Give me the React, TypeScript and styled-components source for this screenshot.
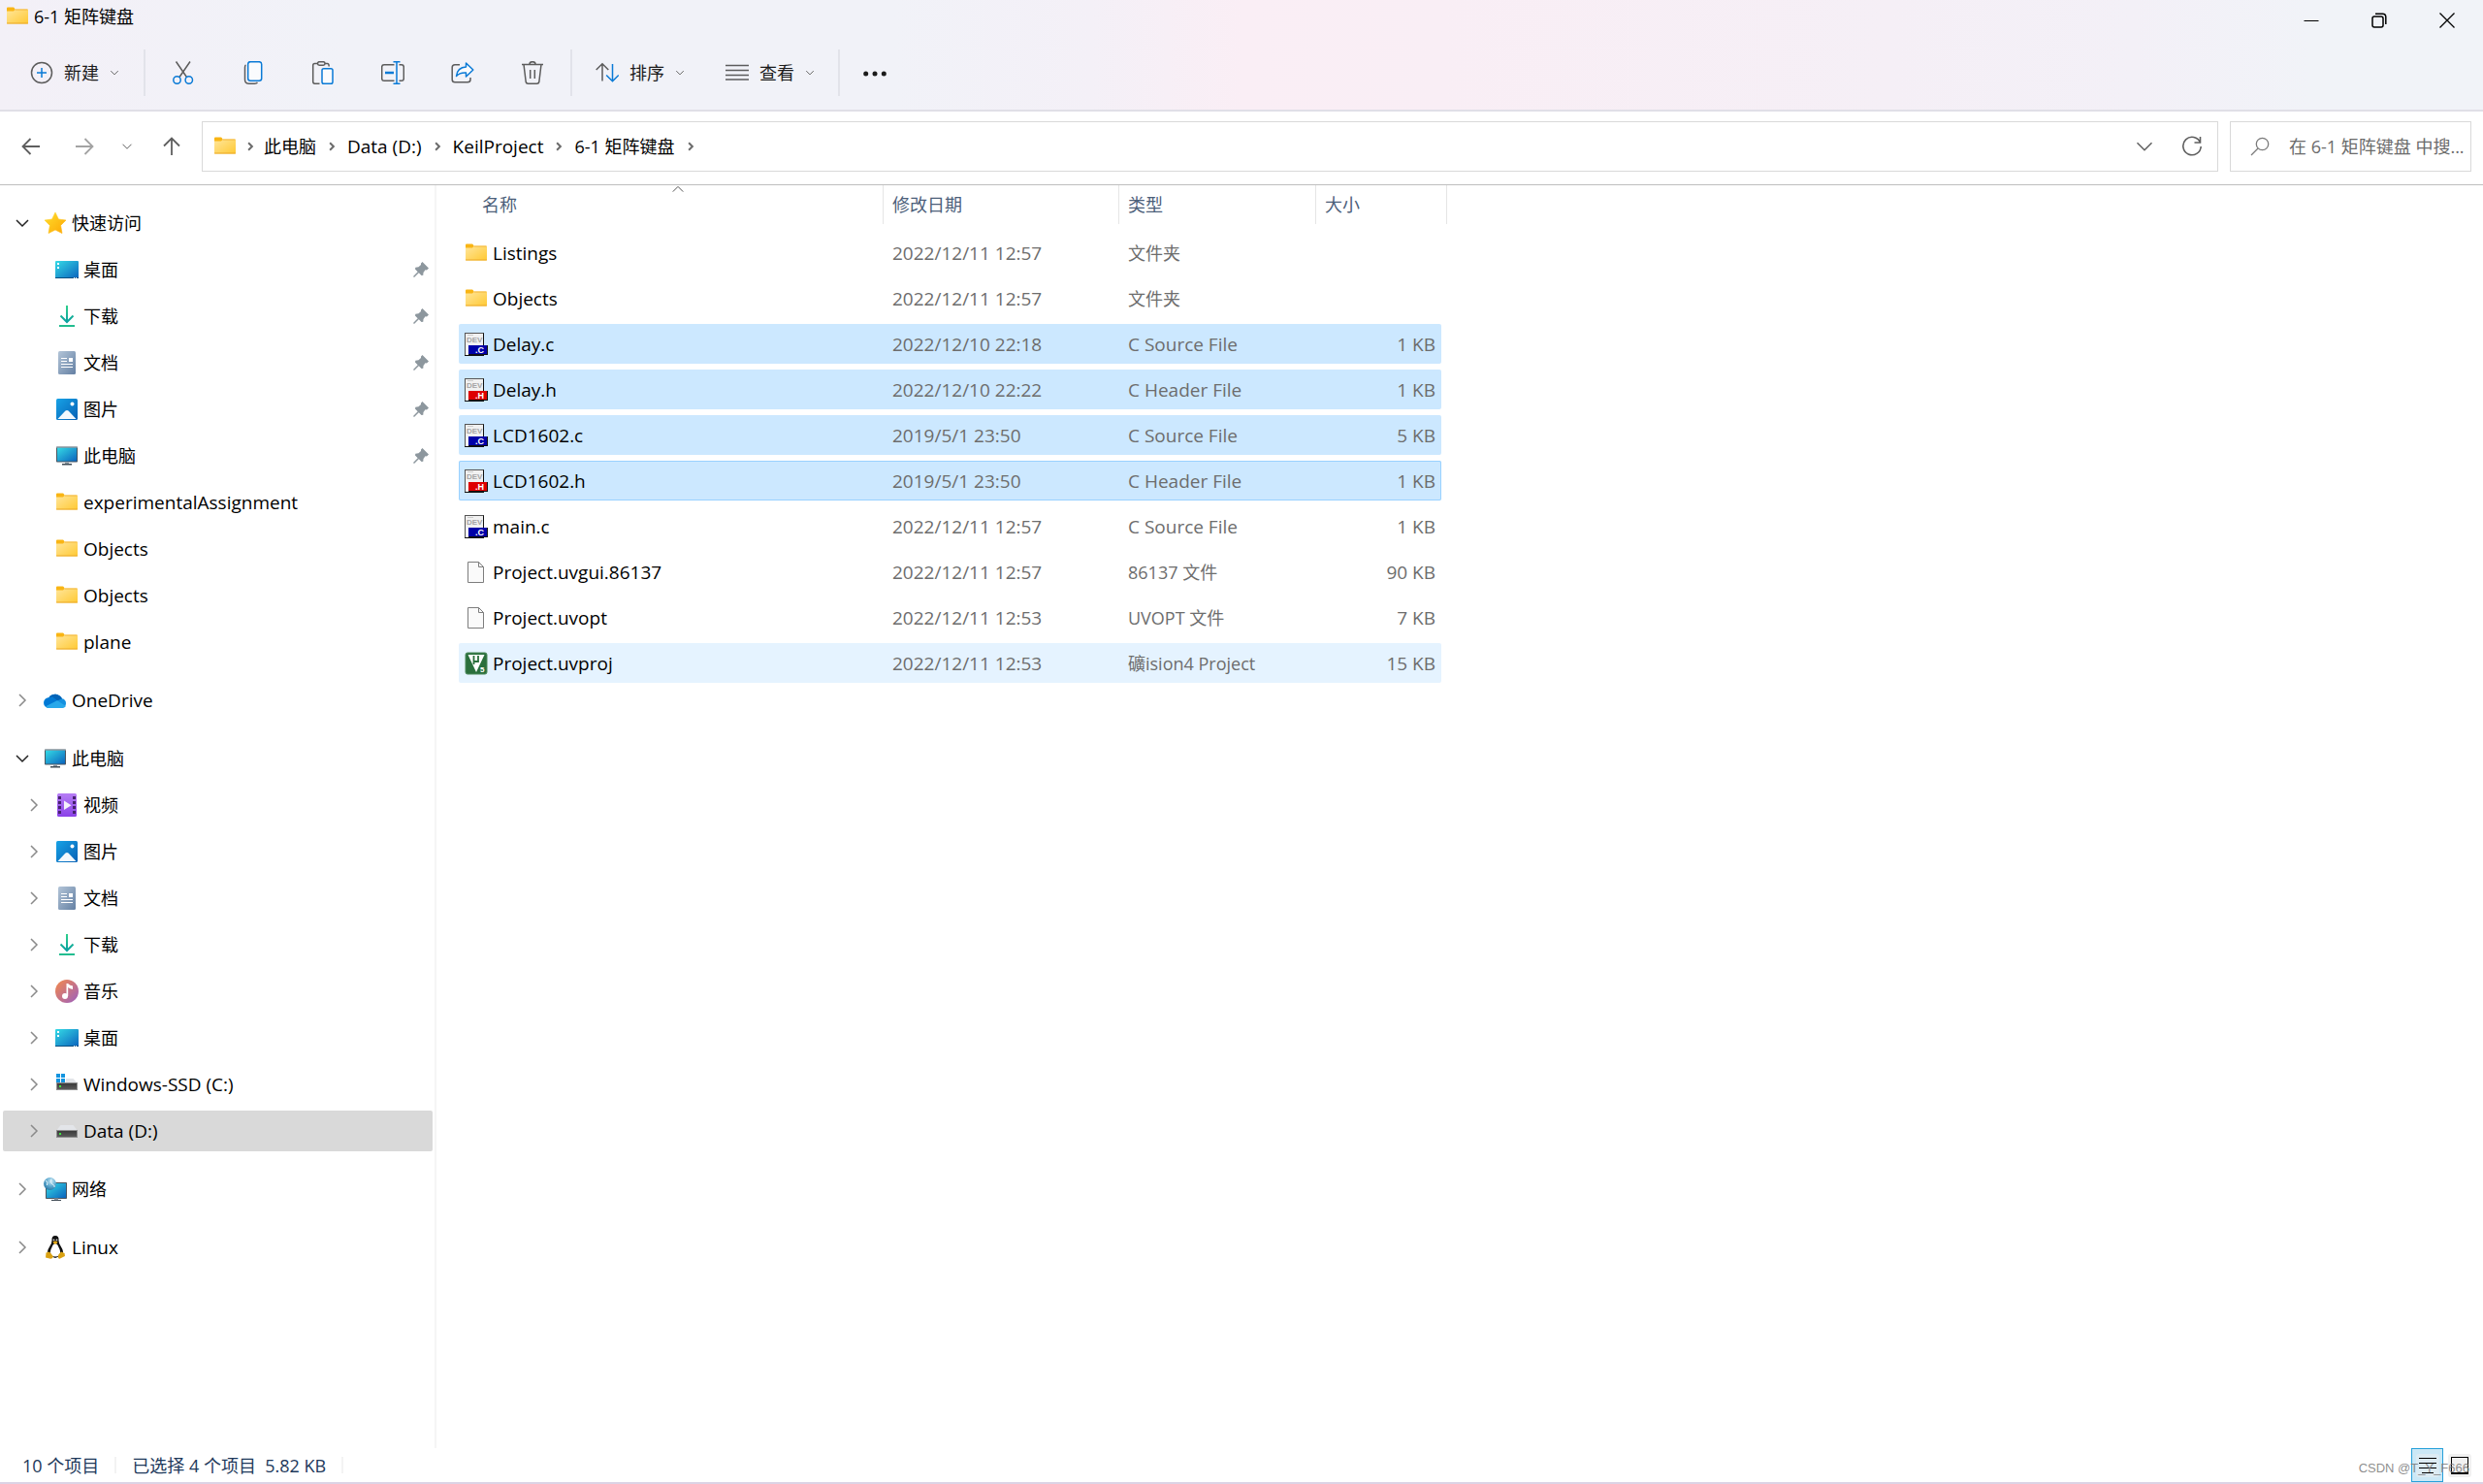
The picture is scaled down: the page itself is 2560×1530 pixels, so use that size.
import React from "react";
import styled, { createGlobalStyle, css } from "styled-components";

const ui = `"Open Sans", "Noto Sans CJK SC", sans-serif`;

const Global = createGlobalStyle`
  *, *::before, *::after { box-sizing: border-box; }
  body { margin: 0; background: #fff; color: #000; font-family: ${ui}; font-size: 18px; line-height: 24px; }
  button, input { font: inherit; color: inherit; background: none; border: 0; padding: 0; margin: 0; }
  svg { display: block; flex: none; }
`;

const hasHan = (s: string) => /[\u4e00-\u9fff]/.test(s);

const Label = styled.span<{ $han: boolean }>`
  font-size: ${(p) => (p.$han ? 18 : 19)}px;
  white-space: pre;
`;
const Text = ({ children }: { children: string }) => <Label $han={hasHan(children)}>{children}</Label>;

const Window = styled.div`
  display: flex;
  flex-direction: column;
  min-height: 100vh;
`;

/* ---------- header ---------- */

const Header = styled.header`
  background: linear-gradient(90deg, #f3f0f7 0%, #f1f2f8 14%, #f1f2f8 36%, #f4f0f7 44%, #faeef5 50%, #f9eef5 58%, #f5eff6 76%, #f3f0f7 86%, #f1f3f8 93%);
  border-bottom: 2px solid #e0dfe7;
`;

const TitleBar = styled.div`
  display: flex;
  justify-content: space-between;
  align-items: flex-start;
  height: 42px;
`;

const Title = styled.h1`
  display: flex;
  align-items: center;
  gap: 5px;
  margin: 0;
  padding: 5px 6px;
  font-size: 18px;
  font-weight: 400;
  line-height: 24px;
`;

const WindowButtons = styled.div`
  display: flex;
  height: 42px;
  padding-right: 2px;
`;

const WindowButton = styled.button`
  display: grid;
  place-items: center;
  width: 70px;
`;

const Toolbar = styled.div`
  display: flex;
  align-items: center;
  height: 71px;
  padding: 0 0 5px 20px;
`;

const MenuButton = styled.button<{ $width: number }>`
  display: flex;
  align-items: center;
  gap: 11px;
  width: ${(p) => p.$width}px;
  height: 48px;
  padding-left: 11px;
  color: #1b1b1b;
`;

const IconButton = styled.button<{ $width?: number }>`
  display: grid;
  place-items: center;
  width: ${(p) => p.$width ?? 72}px;
  height: 48px;
`;

const ToolSeparator = styled.span`
  width: 2px;
  height: 48px;
  margin: 0 3px;
  background: #e2e3ea;
`;

const ToolGroup = styled.div`
  display: flex;
  padding-left: 10px;
`;

/* ---------- address row ---------- */

const AddressRow = styled.div`
  display: flex;
  align-items: center;
  height: 76px;
  padding: 0 12px 3px 8px;
  border-bottom: 1px solid #bebebe;
`;

const NavButton = styled.button<{ $width?: number }>`
  display: grid;
  place-items: center;
  width: ${(p) => p.$width ?? 48}px;
  height: 48px;
`;

const AddressBox = styled.nav`
  display: flex;
  align-items: center;
  flex: 1;
  height: 52px;
  padding: 0 2px 0 11px;
  border: 1px solid #d9d9d9;
`;

const Crumbs = styled.ol`
  display: flex;
  align-items: center;
  flex: 1;
  margin: 0;
  padding: 0;
  list-style: none;
`;

const Crumb = styled.li`
  display: flex;
  align-items: center;
`;

const CrumbLink = styled.a`
  color: #000;
  text-decoration: none;
  white-space: pre;
`;

const CrumbArrow = styled.span<{ $first?: boolean }>`
  display: grid;
  place-items: center;
  width: ${(p) => (p.$first ? 28 : 32)}px;
`;

const SearchBox = styled.label`
  display: flex;
  align-items: center;
  gap: 20px;
  width: 249px;
  height: 52px;
  margin-left: 12px;
  padding: 0 2px 0 20px;
  border: 1px solid #d9d9d9;
`;

const SearchInput = styled.input`
  flex: 1;
  min-width: 0;
  outline: 0;
  text-overflow: ellipsis;
  &::placeholder { color: #6b6b6b; opacity: 1; }
`;

/* ---------- body ---------- */

const Body = styled.div`
  display: flex;
  flex: 1;
`;

const Sidebar = styled.nav`
  display: flex;
  flex-direction: column;
  gap: 18px;
  width: 450px;
  padding: 18px 2px 18px 3px;
  border-right: 2px solid #f5f5f5;
`;

const Group = styled.ul`
  display: flex;
  flex-direction: column;
  gap: 6px;
  margin: 0;
  padding: 0;
  list-style: none;
`;

const TreeRow = styled.li<{ $level: number; $selected?: boolean }>`
  display: flex;
  align-items: center;
  height: 42px;
  padding: 0 3px 0 ${(p) => 12 + p.$level * 12}px;
  border-radius: 2px;
  background: ${(p) => (p.$selected ? "#d9d9d9" : "transparent")};
`;

const Toggle = styled.button`
  display: grid;
  place-items: center;
  width: 16px;
  height: 24px;
  margin-right: 14px;
`;

const TogglePlaceholder = styled.span`
  width: 30px;
`;

const TreeLink = styled.a`
  display: flex;
  align-items: center;
  flex: 1;
  gap: 5px;
  color: #000;
  text-decoration: none;
`;

const Files = styled.main`
  flex: 1;
  padding-left: 23px;
`;

const FileTable = styled.table`
  display: block;
  width: 1019px;
`;

const columns = css`
  display: grid;
  grid-template-columns: 438px 243px 203px 1fr;
`;

const HeadBlock = styled.thead`
  display: block;
`;

const HeadRow = styled.tr`
  ${columns}
  height: 40px;
`;

const HeadCell = styled.th<{ $first?: boolean }>`
  position: relative;
  padding: 8px 0 8px ${(p) => (p.$first ? 24 : 9)}px;
  border-right: 1px solid #e5e5e5;
  color: #4c607a;
  font-weight: 400;
  text-align: left;
`;

const SortMark = styled.span`
  position: absolute;
  top: -3px;
  left: 50%;
`;

const FileBody = styled.tbody`
  display: flex;
  flex-direction: column;
  gap: 6px;
  padding: 9px 6px 0 0;
`;

type RowState = "none" | "selected" | "focused" | "hover";
const rowFill: Record<RowState, string> = {
  none: "transparent",
  selected: "#cce8ff",
  focused: "#cce8ff",
  hover: "#e5f3ff",
};

const FileRow = styled.tr<{ $state: RowState }>`
  ${columns}
  align-items: center;
  height: 41px;
  border-radius: 2px;
  background: ${(p) => rowFill[p.$state]};
  box-shadow: ${(p) => (p.$state === "focused" ? "inset 0 0 0 1px #99d1ff" : "none")};
`;

const NameCell = styled.td`
  display: flex;
  align-items: center;
  gap: 5px;
  padding: 0 0 0 6px;
`;

const InfoCell = styled.td<{ $right?: boolean }>`
  padding: 0 ${(p) => (p.$right ? 6 : 0)}px 0 9px;
  color: #6d6d6d;
  text-align: ${(p) => (p.$right ? "right" : "left")};
`;

/* ---------- status bar ---------- */

const StatusBar = styled.footer`
  position: relative;
  display: flex;
  align-items: center;
  height: 37px;
  padding: 0 8px 0 23px;
  color: #1e395b;
  border-bottom: 2px solid #dcd3e5;
`;

const StatusSeparator = styled.span`
  width: 2px;
  height: 17px;
  margin: 0 16px;
  background: #f3f3f3;
`;

const ViewButtons = styled.div`
  display: flex;
  margin-left: auto;
`;

const ViewButton = styled.button<{ $active?: boolean }>`
  display: grid;
  place-items: center;
  width: 33px;
  height: 35px;
  border: 1px solid ${(p) => (p.$active ? "#26a0da" : "transparent")};
  background: ${(p) => (p.$active ? "#cbe8f6" : "transparent")};
`;

const Watermark = styled.span`
  position: absolute;
  right: 14px;
  bottom: 4px;
  color: rgba(120, 120, 120, 0.85);
  font: 13px/20px "Liberation Sans", sans-serif;
  pointer-events: none;
`;

/* ---------- icons ---------- */

const HiddenSvg = styled.svg`
  position: absolute;
`;

const Gradients = () => (
  <HiddenSvg width="0" height="0" aria-hidden>
    <defs>
      <linearGradient id="gFolder" x1="0" y1="0" x2="1" y2="1">
        <stop offset="0" stopColor="#ffe69c" /><stop offset="1" stopColor="#ffc933" />
      </linearGradient>
      <linearGradient id="gScreen" x1="0" y1="0" x2="1" y2="1">
        <stop offset="0" stopColor="#35dbe6" /><stop offset="1" stopColor="#0a63bd" />
      </linearGradient>
      <linearGradient id="gDown" gradientUnits="userSpaceOnUse" x1="0" y1="1" x2="0" y2="18">
        <stop offset="0" stopColor="#2fd08c" /><stop offset="1" stopColor="#0aa0a0" />
      </linearGradient>
      <linearGradient id="gDoc" x1="0" y1="0" x2="1" y2="1">
        <stop offset="0" stopColor="#b3c5d8" /><stop offset="1" stopColor="#6480a3" />
      </linearGradient>
      <linearGradient id="gPic" x1="0" y1="0" x2="1" y2="1">
        <stop offset="0" stopColor="#17a2e6" /><stop offset="1" stopColor="#0760b5" />
      </linearGradient>
      <linearGradient id="gStar" x1="0" y1="0" x2="1" y2="1">
        <stop offset="0" stopColor="#ffde2e" /><stop offset="1" stopColor="#fda703" />
      </linearGradient>
      <linearGradient id="gVideo" x1="0" y1="0" x2="0" y2="1">
        <stop offset="0" stopColor="#b67df5" /><stop offset="1" stopColor="#8b42e8" />
      </linearGradient>
      <linearGradient id="gMusic" x1="0" y1="0" x2="1" y2="1">
        <stop offset="0" stopColor="#f58a4a" /><stop offset="1" stopColor="#9b5fc0" />
      </linearGradient>
      <linearGradient id="gDrive" x1="0" y1="0" x2="0" y2="1">
        <stop offset="0" stopColor="#3a3a3a" /><stop offset="1" stopColor="#5a5a5a" />
      </linearGradient>
      <radialGradient id="gGlobe" cx="0.6" cy="0.3" r="0.8">
        <stop offset="0" stopColor="#cdeaf6" /><stop offset="0.5" stopColor="#5ea9cf" /><stop offset="1" stopColor="#1e6d9c" />
      </radialGradient>
    </defs>
  </HiddenSvg>
);

const Svg24 = ({ children }: { children: React.ReactNode }) => (
  <svg width="24" height="24" viewBox="0 0 24 24" fill="none" aria-hidden>{children}</svg>
);

const FolderIcon = () => (
  <Svg24>
    <path d="M1 3.5Q1 2.5 2 2.5H7.6Q8.5 2.5 9 3.5L9.6 4.5V9H1Z" fill="#f9b514" />
    <path d="M1 6.5H8L10 4.5H22Q23 4.5 23 5.5V18.5Q23 19.5 22 19.5H2Q1 19.5 1 18.5Z" fill="url(#gFolder)" />
    <path d="M9.5 5H22.5" stroke="#f3b53a" />
    <path d="M1 19H23" stroke="#eba92a" />
  </Svg24>
);
const StarIcon = () => (
  <Svg24>
    <path d="M12 1L15.4 8 23 9 17.6 14.4 19 22.5 12 19 5 22.5 6.4 14.4 1 9 8.6 8Z" fill="url(#gStar)" stroke="url(#gStar)" strokeLinejoin="round" strokeWidth="0.6" />
  </Svg24>
);
const DesktopIcon = () => (
  <Svg24>
    <rect y="3" width="24" height="18" rx="1" fill="url(#gScreen)" />
    <path d="M2 5h2v2H2zM2 9h2v2H2z" fill="#fff" />
    <path d="M0 20.5H24" stroke="#0b4f80" />
    <path d="M19 20.5h1M21 20.5h1" stroke="#fff" />
  </Svg24>
);
const DownloadIcon = () => (
  <Svg24>
    <path d="M5.5 11.5L12 18 18.5 11.5" stroke="url(#gDown)" strokeWidth="2" />
    <rect x="11" y="1" width="2" height="17" fill="url(#gDown)" />
    <rect x="4" y="21" width="16" height="2" fill="#22bd90" />
  </Svg24>
);
const DocumentIcon = () => (
  <Svg24>
    <rect x="3" y="0" width="18" height="24" rx="1.5" fill="url(#gDoc)" />
    <path d="M6 7.5H12M6 10.5H12M6 13.5H18M6 16.5H18" stroke="#fff" strokeWidth="1.2" />
    <rect x="14" y="7" width="4" height="4" fill="#fff" />
  </Svg24>
);
const PictureIcon = () => (
  <Svg24>
    <rect x="1" y="1" width="22" height="22" rx="1.5" fill="url(#gPic)" />
    <path d="M2.5 22L10.5 13.6Q12 12.2 13.5 13.6L21.5 22Z" fill="#f2f8fd" />
    <circle cx="17.5" cy="6.5" r="2" fill="#fff" />
  </Svg24>
);
const PcIcon = () => (
  <Svg24>
    <rect x="1" y="2.5" width="22" height="16" rx="0.8" fill="#4a5560" />
    <rect x="2" y="3.5" width="20" height="14" fill="url(#gScreen)" />
    <path d="M1 3H23" stroke="#aab4bb" />
    <rect x="10" y="18.5" width="4" height="2" fill="#8d99a3" />
    <rect x="7" y="20" width="10" height="1.5" fill="#3f4a54" />
  </Svg24>
);
const CloudIcon = () => (
  <Svg24>
    <path d="M5.5 20A5.4 5.4 0 0 1 5.3 9.2 8 8 0 0 1 19 10.2 5 5 0 0 1 19 20Z" fill="#1490df" />
    <path d="M5.3 9.2A8 8 0 0 1 19 10.2L14 12.5 9 8.8Z" fill="#0364b8" />
    <path d="M5.3 9.2Q10 8 14 12.6L2.2 18.4A5.4 5.4 0 0 1 5.3 9.2Z" fill="#0078d4" />
    <path d="M2.2 18.2L14 12.2 23 18Q21.5 20 19 20H5.5Q3.5 20 2.2 18.2Z" fill="#28a8ea" />
  </Svg24>
);
const VideoIcon = () => (
  <Svg24>
    <rect x="2" y="0" width="20" height="24" rx="1.5" fill="url(#gVideo)" />
    <path d="M3 3h3v3H3zM3 8h3v3H3zM3 13h3v3H3zM3 18h3v3H3zM18 3h3v3h-3zM18 8h3v3h-3zM18 13h3v3h-3zM18 18h3v3h-3z" fill="#47226f" />
    <path d="M9 7.5V17L16.5 12.2Z" fill="#f5f2fa" />
  </Svg24>
);
const MusicIcon = () => (
  <Svg24>
    <circle cx="12" cy="12" r="12" fill="url(#gMusic)" />
    <circle cx="10" cy="17" r="3" fill="#fff" />
    <path d="M11.5 4H13Q15 6 18 6.500V10Q15 9.500 13.200 8V17H11.500Z" fill="#fff" />
  </Svg24>
);
const DriveIcon = () => (
  <Svg24>
    <path d="M1 12L5.5 6H18.5L23 12Z" fill="#e3e5e9" />
    <rect x="1" y="11" width="22" height="8" fill="#8f8f8f" />
    <rect x="2" y="12" width="20" height="6" fill="url(#gDrive)" />
    <rect x="4" y="14" width="2" height="2" fill="#3ee63e" />
  </Svg24>
);
const WinDriveIcon = () => (
  <Svg24>
    <path d="M1 11V6H18.5L23 11Z" fill="#e3e5e9" />
    <rect x="1" y="10" width="22" height="8" fill="#8f8f8f" />
    <rect x="2" y="11" width="20" height="6" fill="url(#gDrive)" />
    <rect x="4" y="13" width="2" height="2" fill="#3ee63e" />
    <path d="M0 0h11v10H0z" fill="#fff" />
    <path d="M1 1h4v4H1zM6 1h4v4H6zM1 6h4v4H1zM6 6h4v4H6z" fill="#1394df" />
  </Svg24>
);
const NetworkIcon = () => (
  <Svg24>
    <rect x="2" y="5" width="22" height="17" rx="0.8" fill="#4a5560" />
    <rect x="3" y="6" width="20" height="15" fill="url(#gScreen)" />
    <rect x="11" y="21.5" width="4" height="2" fill="#8d99a3" />
    <path d="M8 23.5H18" stroke="#3f4a54" />
    <circle cx="6.5" cy="6.5" r="6.5" fill="url(#gGlobe)" />
    <path d="M2 3Q5 5 3.5 8M8 1.5Q6 5 9.5 7.5 12 8 11 10" stroke="#e6f5fb" />
  </Svg24>
);
const LinuxIcon = () => (
  <Svg24>
    <path d="M12 0Q8 0 8.500 5 8.500 8 6 11.500 3 16 4.500 20L12 23 19.500 20Q21 16 18 11.500 15.500 8 15.500 5 16 0 12 0Z" fill="#111" />
    <path d="M12 8Q9.500 8.500 8.500 12 6 16 7.500 20Q12 23 16.500 20 18 16 15.500 12 14.500 8.500 12 8Z" fill="#fff" />
    <path d="M9.500 6.500Q12 4.500 14.500 6.500 13.500 8.800 12 8.800 10.500 8.800 9.500 6.500Z" fill="#e3a714" />
    <circle cx="10.5" cy="4.3" r="0.9" fill="#ddd" /><circle cx="13.5" cy="4.3" r="0.9" fill="#ddd" />
    <path d="M2.500 17.500L6 16.500 10 21.500Q9 24 7 23.800L2 22.500Z" fill="#d9a112" />
    <path d="M21.500 18L18 16.500 15 20Q14.500 24 16.500 23.800L22 21Z" fill="#d9a112" />
  </Svg24>
);

const CodeFileIcon = ({ ext }: { ext: "C" | "H" }) => (
  <Svg24>
    <rect x="0.5" y="0.5" width="19" height="23" fill="#f1f1f1" stroke="#555" />
    <path d="M19.5 0.5V24M0 23.5H20" stroke="#111" />
    <path d="M3 2.5H9" stroke="#ccc" />
    <text x="2" y="10" fontSize="8" fontWeight="700" fill="#a5a5a5" fontFamily="Liberation Sans">DEV</text>
    <rect x="4" y="13" width="20" height="10" fill={ext === "C" ? "#0000a8" : "#de0000"} />
    <path d="M23.5 13V23M4 22.5H24" stroke="#111" />
    <text x="11" y="21" fontSize="9" fontWeight="700" fill="#fff" fontFamily="Liberation Sans">{"." + ext}</text>
  </Svg24>
);
const CFileIcon = () => <CodeFileIcon ext="C" />;
const HFileIcon = () => <CodeFileIcon ext="H" />;
const BlankFileIcon = () => (
  <Svg24>
    <path d="M3.5 1.5H14.5L19.5 6.5V22.5H3.5Z" fill="#fafafa" stroke="#7d7d7d" />
    <path d="M14.5 1.5V6.5H19.5" stroke="#7d7d7d" />
  </Svg24>
);
const UvisionIcon = () => (
  <Svg24>
    <rect x="1" y="1" width="22" height="22" rx="2" fill="#2a6f3c" stroke="#4d8a5b" />
    <path d="M3.5 3H20.5L12 21Z" fill="#fff" />
    <path d="M9.5 4V13M9.5 10H14V4" stroke="#2a6f3c" strokeWidth="1.8" />
    <text x="16" y="21" fontSize="8" fontWeight="700" fill="#fff" fontFamily="Liberation Sans">5</text>
  </Svg24>
);

const Chevron = ({ dir, color = "#8a8a8a", size = 16, w = 1.5 }: { dir: "down" | "right" | "up"; color?: string; size?: number; w?: number }) => {
  const d = dir === "down" ? "M2 5L8 11L14 5" : dir === "up" ? "M2 11L8 5L14 11" : "M5 2L11 8L5 14";
  return (
    <svg width={size} height={size} viewBox="0 0 16 16" fill="none" aria-hidden>
      <path d={d} stroke={color} strokeWidth={(w * 16) / size} />
    </svg>
  );
};
const PinIcon = () => (
  <svg width="18" height="18" viewBox="0 0 18 18" aria-hidden>
    <path d="M10.500 1L17 7.500 15 9.500 13.500 9.300 11.500 12 11.300 14.800 9.500 15 6.800 12.300 2 17 1 16 5.700 11.200 3 8.500 3.300 6.700 6.500 6.300 9 4 9 2.500Z" fill="#8d979e" />
  </svg>
);

const PlusIcon = () => (
  <Svg24>
    <circle cx="12" cy="12" r="10.5" stroke="#5c5c5c" strokeWidth="1.5" />
    <path d="M12 7V17M7 12H17" stroke="#0a7ad6" strokeWidth="1.5" />
  </Svg24>
);
const CutIcon = () => (
  <Svg24>
    <path d="M4.5 0.5L15.5 16.5M19 0.5L8 16.5" stroke="#5c5c5c" strokeWidth="1.5" />
    <circle cx="5.5" cy="19.5" r="3.7" stroke="#0a7ad6" strokeWidth="1.5" />
    <circle cx="17.8" cy="19.5" r="3.7" stroke="#0a7ad6" strokeWidth="1.5" />
  </Svg24>
);
const CopyIcon = () => (
  <Svg24>
    <path d="M4.5 4Q3.500 4.500 3.500 6.500V19Q3.500 23.200 7.500 23.200H13.500Q15.500 23.200 16.500 22" stroke="#5c5c5c" strokeWidth="1.5" />
    <rect x="6.7" y="0.7" width="14" height="19.5" rx="2.5" fill="#fafbfd" stroke="#0a7ad6" strokeWidth="1.5" />
  </Svg24>
);
const PasteIcon = () => (
  <Svg24>
    <path d="M7 2.500H3.500Q1.700 2.500 1.700 4.500V21Q1.700 23.200 3.500 23.200H8.500M14 2.500H16.500Q18.200 2.500 18.200 5.500" stroke="#5c5c5c" strokeWidth="1.5" />
    <rect x="6.5" y="0.7" width="7.5" height="3.5" rx="1.7" stroke="#5c5c5c" strokeWidth="1.5" />
    <rect x="11" y="7.7" width="11" height="15.5" rx="1.8" fill="#fafbfd" stroke="#0a7ad6" strokeWidth="1.5" />
  </Svg24>
);
const RenameIcon = () => (
  <Svg24>
    <path d="M13.500 3.700H3Q0.700 3.700 0.700 6V18Q0.700 20.300 3 20.300H13.500M18.500 3.700H21Q23.300 3.700 23.300 6V18Q23.300 20.300 21 20.300H18.500" stroke="#5c5c5c" strokeWidth="1.5" />
    <path d="M4 12H13" stroke="#0a7ad6" strokeWidth="2.5" />
    <path d="M12.500 0.700H19.500M12.500 23.300H19.500M16 0.700V23.300" stroke="#0a7ad6" strokeWidth="1.5" />
  </Svg24>
);
const ShareIcon = () => (
  <Svg24>
    <path d="M9 3.700H4Q1.200 3.700 1.200 6.500V19Q1.200 21.800 4 21.800H17Q20 21.800 20 19V17" stroke="#5c5c5c" strokeWidth="1.5" />
    <path d="M15.500 2L22.800 9 15.500 16V12Q9 11.500 5.500 15.500 6.500 6.500 15.500 6Z" fill="#fafbfd" stroke="#0a7ad6" strokeWidth="1.5" strokeLinejoin="round" />
  </Svg24>
);
const TrashIcon = () => (
  <Svg24>
    <path d="M1 3.500H23M3 3.500L5.200 21.500Q5.500 23.200 7.500 23.200H16.500Q18.500 23.200 18.800 21.500L21 3.500M9 3Q9 0.700 12 0.700T15 3M9.700 9V18M14.300 9V18" stroke="#5c5c5c" strokeWidth="1.5" />
  </Svg24>
);
const SortIcon = () => (
  <Svg24>
    <path d="M7 20.500V3M0.700 9L7 2.700 13.300 9" stroke="#5c5c5c" strokeWidth="1.5" />
    <path d="M17.500 3V20M11.200 14.500L17.500 20.800 23.800 14.500" stroke="#0a7ad6" strokeWidth="1.5" />
  </Svg24>
);
const ViewIcon = () => (
  <Svg24>
    <path d="M0 4.500H24M0 9.500H24M0 14.500H24M0 19H24" stroke="#5c5c5c" strokeWidth="1.5" />
  </Svg24>
);
const MoreIcon = () => (
  <Svg24>
    <circle cx="2.7" cy="13" r="2.5" fill="#1b1b1b" /><circle cx="12" cy="13" r="2.5" fill="#1b1b1b" /><circle cx="21.3" cy="13" r="2.5" fill="#1b1b1b" />
  </Svg24>
);
const Arrow = ({ turn, color }: { turn: number; color: string }) => (
  <svg width="20" height="20" viewBox="0 0 20 20" fill="none" aria-hidden>
    <path d="M19 10H1.5M9.5 2L1.5 10L9.5 18" stroke={color} strokeWidth="1.8" transform={`rotate(${turn} 10 10)`} />
  </svg>
);
const RefreshIcon = () => (
  <svg width="22" height="22" viewBox="0 0 22 22" fill="none" aria-hidden>
    <path d="M19.5 7A9.2 9.2 0 1 0 20.2 11M19.5 1V7H13.5" stroke="#5f5f5f" strokeWidth="1.6" />
  </svg>
);
const SearchIcon = () => (
  <svg width="20" height="20" viewBox="0 0 20 20" fill="none" aria-hidden>
    <circle cx="12.5" cy="7.5" r="6.2" stroke="#7a7a7a" strokeWidth="1.3" />
    <path d="M8 12L1 19" stroke="#7a7a7a" strokeWidth="1.3" />
  </svg>
);
const MinimizeIcon = () => (
  <svg width="16" height="16" viewBox="0 0 16 16" aria-hidden><path d="M0.5 8.5H15.5" stroke="#000" /></svg>
);
const RestoreIcon = () => (
  <svg width="16" height="16" viewBox="0 0 16 16" fill="none" aria-hidden>
    <rect x="1" y="4" width="11" height="11" rx="2" stroke="#000" strokeWidth="1.5" />
    <path d="M4 1.2H11.5Q14.8 1.2 14.8 4.5V12" stroke="#000" strokeWidth="1.5" />
  </svg>
);
const CloseIcon = () => (
  <svg width="16" height="16" viewBox="0 0 16 16" aria-hidden><path d="M0.5 0.5L15.5 15.5M15.5 0.5L0.5 15.5" stroke="#000" strokeWidth="1.3" /></svg>
);
const DetailsIcon = () => (
  <svg width="24" height="24" viewBox="0 0 24 24" aria-hidden>
    <rect width="24" height="24" rx="3" fill="#dcebf3" />
    <path d="M3 4.5H21M3 9.5H21M3 14.5H21M6 19.5H18" stroke="#000" />
  </svg>
);
const LargeIcon = () => (
  <svg width="24" height="24" viewBox="0 0 24 24" fill="none" aria-hidden>
    <rect width="24" height="24" rx="3" fill="#f1f1f1" />
    <rect x="3.5" y="3.5" width="17" height="17" stroke="#000" />
    <path d="M3 19.5H21" stroke="#000" />
  </svg>
);

/* ---------- data ---------- */

type Node = { label: string; icon: React.FC; level: number; toggle?: "open" | "closed"; pinned?: boolean; selected?: boolean };

const groups: Node[][] = [
  [
    { label: "快速访问", icon: StarIcon, level: 0, toggle: "open" },
    { label: "桌面", icon: DesktopIcon, level: 1, pinned: true },
    { label: "下载", icon: DownloadIcon, level: 1, pinned: true },
    { label: "文档", icon: DocumentIcon, level: 1, pinned: true },
    { label: "图片", icon: PictureIcon, level: 1, pinned: true },
    { label: "此电脑", icon: PcIcon, level: 1, pinned: true },
    { label: "experimentalAssignment", icon: FolderIcon, level: 1 },
    { label: "Objects", icon: FolderIcon, level: 1 },
    { label: "Objects", icon: FolderIcon, level: 1 },
    { label: "plane", icon: FolderIcon, level: 1 },
  ],
  [{ label: "OneDrive", icon: CloudIcon, level: 0, toggle: "closed" }],
  [
    { label: "此电脑", icon: PcIcon, level: 0, toggle: "open" },
    { label: "视频", icon: VideoIcon, level: 1, toggle: "closed" },
    { label: "图片", icon: PictureIcon, level: 1, toggle: "closed" },
    { label: "文档", icon: DocumentIcon, level: 1, toggle: "closed" },
    { label: "下载", icon: DownloadIcon, level: 1, toggle: "closed" },
    { label: "音乐", icon: MusicIcon, level: 1, toggle: "closed" },
    { label: "桌面", icon: DesktopIcon, level: 1, toggle: "closed" },
    { label: "Windows-SSD (C:)", icon: WinDriveIcon, level: 1, toggle: "closed" },
    { label: "Data (D:)", icon: DriveIcon, level: 1, toggle: "closed", selected: true },
  ],
  [{ label: "网络", icon: NetworkIcon, level: 0, toggle: "closed" }],
  [{ label: "Linux", icon: LinuxIcon, level: 0, toggle: "closed" }],
];

type FileItem = { name: string; icon: React.FC; date: string; type: string; size: string; state?: RowState };

const files: FileItem[] = [
  { name: "Listings", icon: FolderIcon, date: "2022/12/11 12:57", type: "文件夹", size: "" },
  { name: "Objects", icon: FolderIcon, date: "2022/12/11 12:57", type: "文件夹", size: "" },
  { name: "Delay.c", icon: CFileIcon, date: "2022/12/10 22:18", type: "C Source File", size: "1 KB", state: "selected" },
  { name: "Delay.h", icon: HFileIcon, date: "2022/12/10 22:22", type: "C Header File", size: "1 KB", state: "selected" },
  { name: "LCD1602.c", icon: CFileIcon, date: "2019/5/1 23:50", type: "C Source File", size: "5 KB", state: "selected" },
  { name: "LCD1602.h", icon: HFileIcon, date: "2019/5/1 23:50", type: "C Header File", size: "1 KB", state: "focused" },
  { name: "main.c", icon: CFileIcon, date: "2022/12/11 12:57", type: "C Source File", size: "1 KB" },
  { name: "Project.uvgui.86137", icon: BlankFileIcon, date: "2022/12/11 12:57", type: "86137 文件", size: "90 KB" },
  { name: "Project.uvopt", icon: BlankFileIcon, date: "2022/12/11 12:53", type: "UVOPT 文件", size: "7 KB" },
  { name: "Project.uvproj", icon: UvisionIcon, date: "2022/12/11 12:53", type: "礦ision4 Project", size: "15 KB", state: "hover" },
];

const tools: [string, React.FC][] = [
  ["剪切", CutIcon], ["复制", CopyIcon], ["粘贴", PasteIcon], ["重命名", RenameIcon], ["共享", ShareIcon], ["删除", TrashIcon],
];

const crumbs = ["此电脑", "Data (D:)", "KeilProject", "6-1 矩阵键盘"];

/* ---------- page ---------- */

const MenuItem = ({ icon: Icon, label, width }: { icon: React.FC; label: string; width: number }) => (
  <MenuButton type="button" $width={width}>
    <Icon />
    <Text>{label}</Text>
    <Chevron dir="down" size={10} w={1} color="#666" />
  </MenuButton>
);

const CrumbChevron = () => <Chevron dir="right" size={10} w={2} color="#6b6b6b" />;

export default function App() {
  return (
    <Window>
      <Global />
      <Gradients />
      <Header>
        <TitleBar>
          <Title><FolderIcon />6-1 矩阵键盘</Title>
          <WindowButtons>
            <WindowButton type="button" aria-label="最小化"><MinimizeIcon /></WindowButton>
            <WindowButton type="button" aria-label="还原"><RestoreIcon /></WindowButton>
            <WindowButton type="button" aria-label="关闭"><CloseIcon /></WindowButton>
          </WindowButtons>
        </TitleBar>
        <Toolbar>
          <MenuItem icon={PlusIcon} label="新建" width={125} />
          <ToolSeparator />
          {tools.map(([name, Icon]) => (
            <IconButton key={name} type="button" aria-label={name}><Icon /></IconButton>
          ))}
          <ToolSeparator />
          <ToolGroup>
            <MenuItem icon={SortIcon} label="排序" width={134} />
            <MenuItem icon={ViewIcon} label="查看" width={124} />
          </ToolGroup>
          <ToolSeparator />
          <IconButton type="button" aria-label="更多" $width={66}><MoreIcon /></IconButton>
        </Toolbar>
      </Header>

      <AddressRow>
        <NavButton type="button" aria-label="后退"><Arrow turn={0} color="#5f5f5f" /></NavButton>
        <NavButton type="button" aria-label="前进" $width={61}><Arrow turn={180} color="#a3a3a3" /></NavButton>
        <NavButton type="button" aria-label="最近" $width={28}><Chevron dir="down" size={12} w={1} color="#5f5f5f" /></NavButton>
        <NavButton type="button" aria-label="向上" $width={63}><Arrow turn={90} color="#5f5f5f" /></NavButton>
        <AddressBox aria-label="地址">
          <FolderIcon />
          <CrumbArrow $first><CrumbChevron /></CrumbArrow>
          <Crumbs>
            {crumbs.map((c) => (
              <Crumb key={c}>
                <CrumbLink href="#"><Text>{c}</Text></CrumbLink>
                <CrumbArrow><CrumbChevron /></CrumbArrow>
              </Crumb>
            ))}
          </Crumbs>
          <NavButton type="button" aria-label="以前的位置" $width={50}><Chevron dir="down" size={20} w={1.5} color="#5f5f5f" /></NavButton>
          <NavButton type="button" aria-label="刷新"><RefreshIcon /></NavButton>
        </AddressBox>
        <SearchBox>
          <SearchIcon />
          <SearchInput type="text" aria-label="搜索" placeholder="在 6-1 矩阵键盘 中搜..." />
        </SearchBox>
      </AddressRow>

      <Body>
        <Sidebar aria-label="导航窗格">
          {groups.map((g, gi) => (
            <Group key={gi}>
              {g.map((n, i) => (
                <TreeRow key={i} $level={n.level} $selected={n.selected}>
                  {n.toggle ? (
                    <Toggle type="button" aria-label={n.toggle === "open" ? "折叠" : "展开"}>
                      {n.toggle === "open" ? <Chevron dir="down" color="#222" /> : <Chevron dir="right" />}
                    </Toggle>
                  ) : (
                    <TogglePlaceholder />
                  )}
                  <TreeLink href="#"><n.icon /><Text>{n.label}</Text></TreeLink>
                  {n.pinned && <PinIcon />}
                </TreeRow>
              ))}
            </Group>
          ))}
        </Sidebar>
        <Files>
          <FileTable>
            <HeadBlock>
              <HeadRow>
                <HeadCell scope="col" $first>名称<SortMark><Chevron dir="up" size={14} w={1} color="#555" /></SortMark></HeadCell>
                <HeadCell scope="col">修改日期</HeadCell>
                <HeadCell scope="col">类型</HeadCell>
                <HeadCell scope="col">大小</HeadCell>
              </HeadRow>
            </HeadBlock>
            <FileBody>
              {files.map((f) => (
                <FileRow key={f.name} $state={f.state ?? "none"}>
                  <NameCell><f.icon /><Text>{f.name}</Text></NameCell>
                  <InfoCell><Text>{f.date}</Text></InfoCell>
                  <InfoCell><Text>{f.type}</Text></InfoCell>
                  <InfoCell $right><Text>{f.size}</Text></InfoCell>
                </FileRow>
              ))}
            </FileBody>
          </FileTable>
        </Files>
      </Body>

      <StatusBar>
        <Text>10 个项目</Text>
        <StatusSeparator />
        <Text>{"已选择 4 个项目  5.82 KB"}</Text>
        <StatusSeparator />
        <ViewButtons>
          <ViewButton type="button" aria-label="详细信息" $active><DetailsIcon /></ViewButton>
          <ViewButton type="button" aria-label="大图标"><LargeIcon /></ViewButton>
        </ViewButtons>
        <Watermark>CSDN @T_Y_F666</Watermark>
      </StatusBar>
    </Window>
  );
}
